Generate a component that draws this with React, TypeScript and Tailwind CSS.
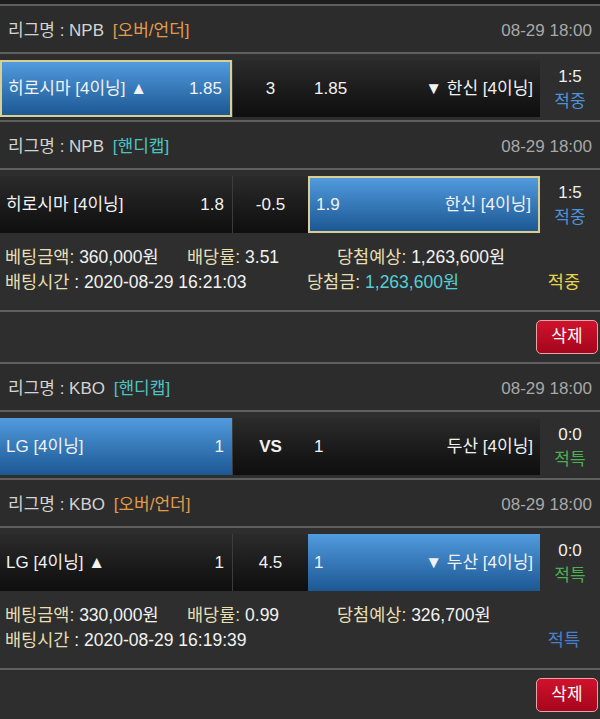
import type { ReactNode } from 'react';

const FONT = { fontFamily: '"Liberation Sans", "Noto Sans CJK KR", sans-serif' };

type Side = {
  label: string;
  odds: string;
  blue?: boolean;
  picked?: boolean;
};

function Line() {
  return <div className="h-[2px] bg-[#5f5f5f]" />;
}

function Header({ league, type, typeColor }: { league: string; type: string; typeColor: string }) {
  return (
    <div className="flex h-[46px] items-center justify-between bg-[#2c2c2c] px-[8px] pt-[3px] text-[17px]">
      <div className="text-[#d4d4d4]">
        리그명 : {league} <span className={`ml-[4px] ${typeColor}`}>{type}</span>
      </div>
      <div className="text-[#a8a8a8]">08-29 18:00</div>
    </div>
  );
}

function cellClass(side: Side) {
  if (side.blue) {
    return `bg-gradient-to-b from-[#519bde] to-[#1c5894] ${
      side.picked ? 'border-2 border-[#d8cf90]' : ''
    }`;
  }
  return 'bg-gradient-to-b from-[#2b2b2b] to-[#0e0e0e]';
}

function Row({
  left,
  mid,
  right,
  score,
  result,
  resultColor,
  vs,
}: {
  left: Side;
  mid: string;
  right: Side;
  score: string;
  result: string;
  resultColor: string;
  vs?: boolean;
}) {
  return (
    <div className="flex bg-[#2e2e2e] pb-[3px] pt-[6px] text-[17px] text-[#f2f2f2]">
      <div className={`flex h-[57px] w-[232px] items-center justify-between pl-[6px] pr-[8px] ${cellClass(left)}`}>
        <span>{left.label}</span>
        <span>{left.odds}</span>
      </div>
      <div className="flex h-[57px] w-[76px] items-center justify-center border-l border-[#3c3c3c] bg-gradient-to-b from-[#2b2b2b] to-[#0e0e0e]">
        <span className={vs ? 'font-bold' : ''}>{mid}</span>
      </div>
      <div className={`flex h-[57px] w-[232px] items-center justify-between pl-[6px] pr-[7px] ${cellClass(right)}`}>
        <span>{right.odds}</span>
        <span>{right.label}</span>
      </div>
      <div className="flex w-[60px] flex-col items-center justify-center leading-[25px]">
        <span className="text-[#f0f0f0]">{score}</span>
        <span className={resultColor}>{result}</span>
      </div>
    </div>
  );
}

function Info({ children }: { children: ReactNode }) {
  return <div className="bg-[#2e2e2e] px-[5px] text-[17.5px] leading-[25px] text-[#f2f2f2]">{children}</div>;
}

function Label({ children }: { children: ReactNode }) {
  return <span className="text-[#e6dfb2]">{children}</span>;
}

function DeleteBar() {
  return (
    <div className="flex h-[50px] items-center justify-end bg-[#2e2e2e] pr-[2px]">
      <button
        type="button"
        className="flex h-[34px] w-[62px] items-center justify-center rounded-[5px] border border-[#e7a3a8] bg-gradient-to-b from-[#d0122c] to-[#a5061c] text-[17px] text-white"
      >
        삭제
      </button>
    </div>
  );
}

export default function App() {
  return (
    <div className="h-[719px] w-[600px] overflow-hidden bg-[#2e2e2e]" style={FONT}>
      <div className="h-[4px] bg-[#1d1d1d]" />
      <Line />

      <Header league="NPB" type="[오버/언더]" typeColor="text-[#e29b4b]" />
      <Line />
      <Row
        left={{ label: '히로시마 [4이닝] ▲', odds: '1.85', blue: true, picked: true }}
        mid="3"
        right={{ label: '▼ 한신 [4이닝]', odds: '1.85' }}
        score="1:5"
        result="적중"
        resultColor="text-[#4d93da]"
      />
      <Line />

      <Header league="NPB" type="[핸디캡]" typeColor="text-[#4cc5c2]" />
      <Line />
      <Row
        left={{ label: '히로시마 [4이닝]', odds: '1.8' }}
        mid="-0.5"
        right={{ label: '한신 [4이닝]', odds: '1.9', blue: true, picked: true }}
        score="1:5"
        result="적중"
        resultColor="text-[#4d93da]"
      />
      <Info>
        <div className="flex pt-[9px]">
          <div className="w-[182px]">
            <Label>베팅금액:</Label> 360,000원
          </div>
          <div className="w-[150px]">
            <Label>배당률:</Label> 3.51
          </div>
          <div>
            <Label>당첨예상:</Label> 1,263,600원
          </div>
        </div>
        <div className="flex pb-[15px]">
          <div className="w-[302px]">
            <Label>배팅시간</Label> : 2020-08-29 16:21:03
          </div>
          <div className="flex-1">
            <Label>당첨금:</Label> <span className="text-[#55cfd5]">1,263,600원</span>
          </div>
          <div className="pr-[15px] text-[#e6d54c]">적중</div>
        </div>
      </Info>
      <Line />
      <DeleteBar />
      <Line />

      <Header league="KBO" type="[핸디캡]" typeColor="text-[#4cc5c2]" />
      <Line />
      <Row
        left={{ label: 'LG [4이닝]', odds: '1', blue: true }}
        mid="VS"
        vs
        right={{ label: '두산 [4이닝]', odds: '1' }}
        score="0:0"
        result="적특"
        resultColor="text-[#4caf50]"
      />
      <Line />

      <Header league="KBO" type="[오버/언더]" typeColor="text-[#e29b4b]" />
      <Line />
      <Row
        left={{ label: 'LG [4이닝] ▲', odds: '1' }}
        mid="4.5"
        right={{ label: '▼ 두산 [4이닝]', odds: '1', blue: true }}
        score="0:0"
        result="적특"
        resultColor="text-[#4caf50]"
      />
      <Info>
        <div className="flex pt-[9px]">
          <div className="w-[182px]">
            <Label>베팅금액:</Label> 330,000원
          </div>
          <div className="w-[150px]">
            <Label>배당률:</Label> 0.99
          </div>
          <div>
            <Label>당첨예상:</Label> 326,700원
          </div>
        </div>
        <div className="flex pb-[15px]">
          <div className="flex-1">
            <Label>배팅시간</Label> : 2020-08-29 16:19:39
          </div>
          <div className="pr-[15px] text-[#4a80cf]">적특</div>
        </div>
      </Info>
      <Line />
      <DeleteBar />
    </div>
  );
}
